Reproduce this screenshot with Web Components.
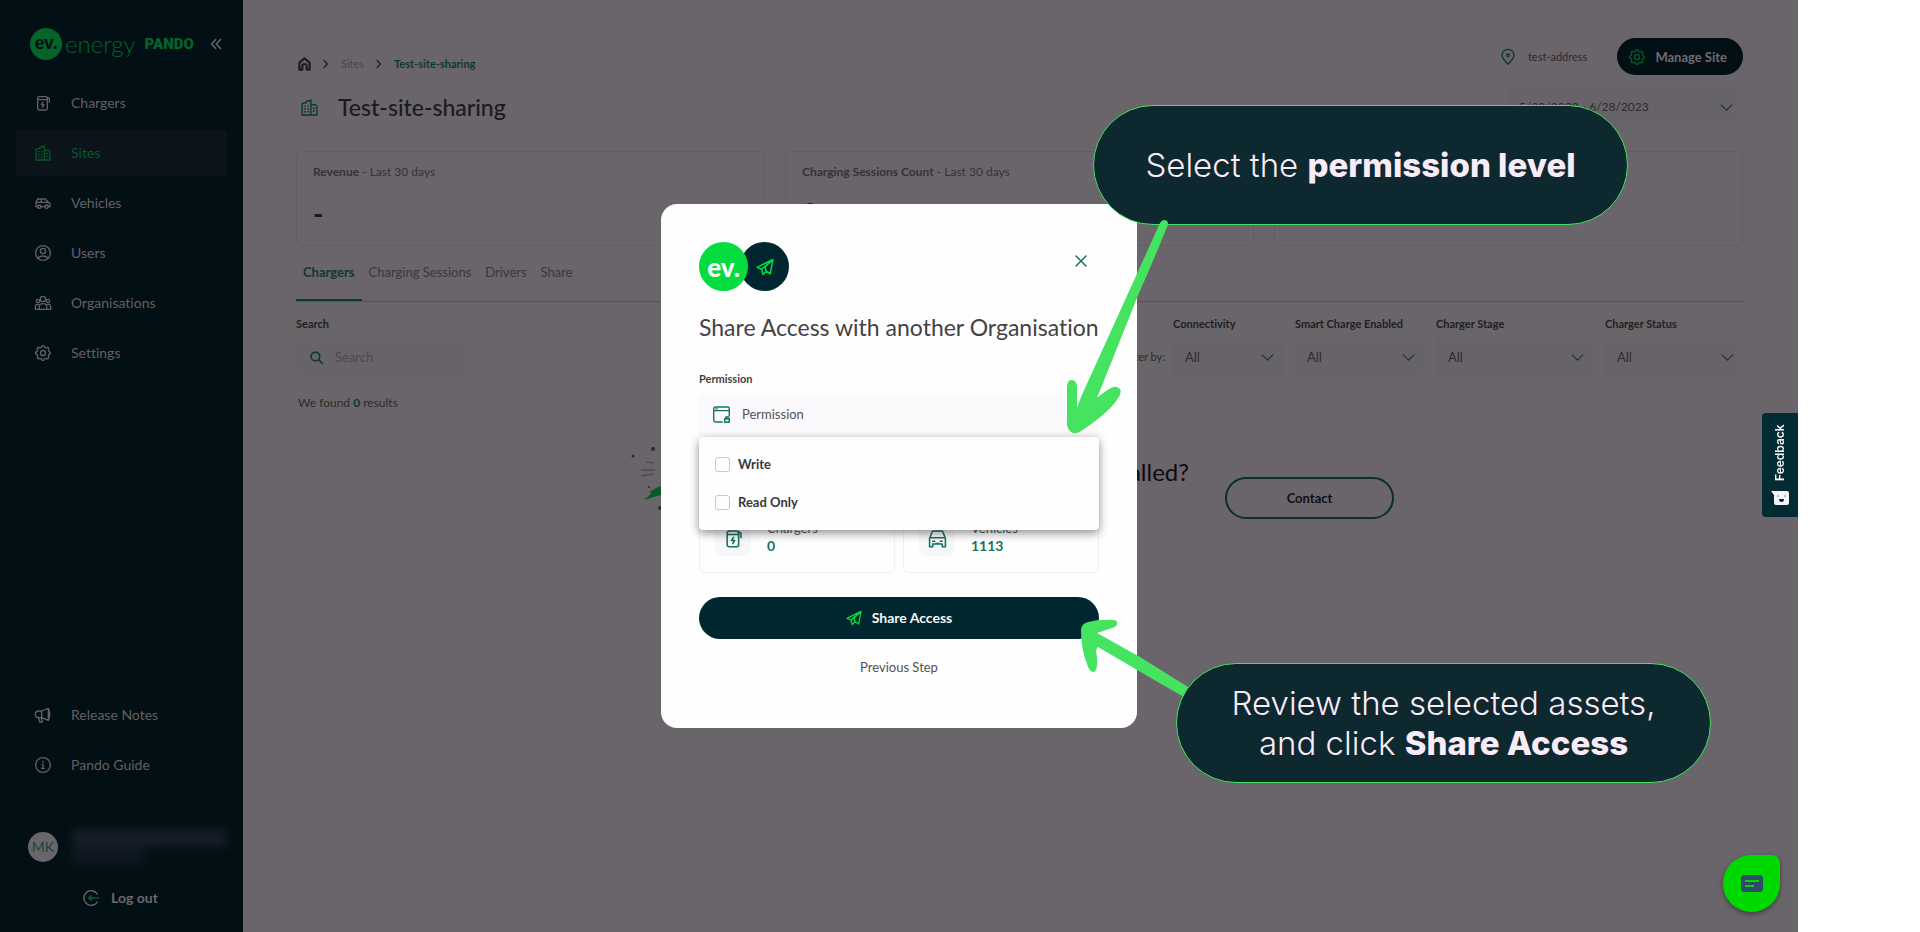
<!DOCTYPE html>
<html lang="en">
<head>
<meta charset="utf-8">
<title>Test-site-sharing | Pando</title>
<style>
  html, body { margin: 0; background: #fff; }
  body { font-family: Lato, "Noto Sans", sans-serif; font-size: 14px; line-height: 20px; font-variant-ligatures: none; }
</style>
</head>
<body>
<pando-app></pando-app>

<script>
/* ── icons, 24 unit grid ────────────────────────────────────────────────── */

const icons = {
  charger: '<path d="M4 5.5A3 3 0 0 1 7 2.500h8.500a3 3 0 0 1 3 3V20a2.500 2.500 0 0 1-2.500 2.500H6.500A2.500 2.500 0 0 1 4 20zM4 7h14.500M18.500 3.500l3 2v5.500M12 10.500l-2.500 4h4l-2.500 4"/>',
  site: '<path d="M1.500 6.500 7.500 5V3.500L14 1.500v21H1.500zM14 8h6.500l2 2v12.500H14M5 10h1M9.500 10h1M5 14h1M9.500 14h1M5 18h1M9.500 18h1M17.500 13h1.500M17.500 17h1.500"/>',
  van: '<path d="M4 17.500H1.500V11L4 6h11.500l4.500 5 2.500 1.500v5H20M9 17.500h6M1.500 11H20M9.500 6v5"/><circle cx="6.500" cy="17.500" r="2.500"/><circle cx="17.500" cy="17.500" r="2.500"/>',
  user: '<circle cx="12" cy="12" r="11"/><circle cx="12" cy="9" r="4"/><path d="M4.500 19.500c4-4 11-4 15 0"/>',
  group: '<circle cx="12" cy="6" r="4"/><circle cx="4.500" cy="9" r="2.500"/><circle cx="19.500" cy="9" r="2.500"/><path d="M6.500 21.500v-4c0-6 11-6 11 0v4zM6.500 21.500H.5v-4c0-3 2.500-4 5-3.500M17.500 21.500h6v-4c0-3-2.500-4-5-3.500"/>',
  gear: '<path d="M9.500 3.500 11 1h2l1.500 2.500q1 .2 2 .8L19.200 3.500l1.500 1.500-.8 2.700q.6 1 .8 2L23 11v2l-2.300 1.500q-.2 1-.8 2l.8 2.700-1.500 1.500-2.700-.8q-1 .6-2 .8L13 23h-2l-1.500-2.300q-1-.2-2-.8l-2.700.8-1.500-1.500.8-2.700q-.6-1-.8-2L1 13v-2l2.300-1.500q.2-1 .8-2L3.300 5l1.500-1.500 2.700.8q1-.6 2-.8z"/><circle cx="12" cy="12" r="3.800"/>',
  horn: '<path d="M10 6H5.500a4.500 4.500 0 0 0 0 10H10l10 4V2zM10 6v10M5.500 16l1.500 6.500h4L9.500 16M20 2q4.500 9 0 18"/>',
  info: '<circle cx="12" cy="12" r="11"/><path d="M12 11v6M10.500 11H12M10 17h4M12 6.500v1.500"/>',
  exit: '<path d="M21.500 6a11 11 0 1 0 0 12"/><path d="M24 12H9M12.500 8.500 8 12l4.500 3.500z" stroke="#04582c" fill="#04582c"/>',
  home: '<path d="M2.500 10 12 1.500l9.500 8.500v12.500H16V16a4 4 0 0 0-8 0v6.500H2.500z"/>',
  right: '<path d="m6 1 10 11L6 23"/>',
  down: '<path d="m2 7 10 10L22 7"/>',
  back: '<path d="M11.500 3 3 12l8.500 9M21 3l-8.500 9 8.500 9"/>',
  close: '<path d="m2 2 20 20M22 2 2 22"/>',
  pin: '<path d="M12 23C7 17 3 14 3 9.500a9 9 0 0 1 18 0C21 14 17 17 12 23z"/><circle cx="12" cy="9.500" r="2"/>',
  search: '<circle cx="10" cy="10" r="8"/><path d="m16 16 7 7"/>',
  plane: '<path d="M1.500 12.500 22.500 2l-3.500 19-5.500-3.500L9.500 22 7.500 15zM7.500 15 22.500 2 12 12l1.500 5.500"/>',
  window: '<path d="M13 22.500H3.500a2.500 2.500 0 0 1-2.500-2.500V4a2.500 2.500 0 0 1 2.500-2.500h17A2.500 2.500 0 0 1 23 4v10M1 6.500h22M4 4h2"/><rect x="16.500" y="18" width="6.500" height="5"/><path d="M18 18v-2.500h3.500V18"/>',
  car: '<path d="M2 22.500V12l3-8q.5-1.500 2-1.500h10q1.500 0 2 1.500l3 8v10.500h-4V19H6v3.500zM3 11h18M6 15.500h2.500M15.500 15.500H18M10 18.500h4"/>'
};

const define = (name, html) => {
  customElements.define(name, class extends HTMLElement {
    connectedCallback() {
      if (this.shadowRoot) return;
      const root = this.attachShadow({ mode: 'open' });
      const attr = (key, fallback = '') => this.getAttribute(key) || fallback;
      root.innerHTML = typeof html === 'function' ? html(attr) : html;
    }
  });
};

define('ui-icon', attr => `
  <style>
    :host { display: inline-flex; flex: none; width: 16px; height: 16px; }
    svg { width: 100%; height: 100%; overflow: visible; }
  </style>
  <svg viewBox="0 0 24 24" fill="none" stroke="currentColor" stroke-width="${attr('weight', '2')}"
    stroke-linejoin="round" stroke-linecap="round" aria-hidden="true">${icons[attr('name')]}</svg>
`);

/* ── sidebar ────────────────────────────────────────────────────────────── */

define('side-link', attr => `
  <style>
    :host { display: block; }
    a {
      display: flex;
      align-items: center;
      gap: 20px;
      height: 46px;
      padding: 0 19px;
      border-radius: 4px;
      color: #636066;
      text-decoration: none;
    }
    :host([active]) a { background: #0b141a; color: #04582c; }
  </style>
  <a href="#${attr('icon')}"><ui-icon name="${attr('icon')}"></ui-icon><slot></slot></a>
`);

define('side-bar', `
  <style>
    :host {
      display: flex;
      flex-direction: column;
      box-sizing: border-box;
      width: 243px;
      flex: none;
      padding: 24px 16px;
      background: #020f14;
      color: #6a676d;
    }
    .brand { display: flex; align-items: center; height: 40px; padding-left: 14px; color: #04642a; }
    .mark {
      width: 32px;
      height: 32px;
      border-radius: 50%;
      background: #04642a;
      color: #020f14;
      font-size: 18px;
      font-weight: 900;
      line-height: 28px;
      text-align: center;
    }
    .energy { margin-left: 3px; font-size: 24px; font-weight: 300; line-height: 32px; }
    .pando { margin-left: 9px; font: 900 15px/24px Roboto, sans-serif; }
    button { border: 0; padding: 0; background: none; color: inherit; font: inherit; cursor: pointer; }
    .fold { display: flex; margin-left: auto; margin-right: 5px; color: #6a676d; }
    .fold ui-icon { width: 12px; height: 12px; }
    nav { display: flex; flex-direction: column; gap: 4px; }
    .top { margin-top: 16px; }
    .bottom { margin-top: auto; }
    .person { display: flex; align-items: center; gap: 14px; height: 30px; margin: 44px 0 0 12px; }
    .avatar {
      width: 30px;
      height: 30px;
      border-radius: 50%;
      background: #6a656a;
      color: #0d4a3c;
      line-height: 30px;
      text-align: center;
    }
    .redacted { display: flex; flex-direction: column; filter: blur(4px); }
    .redacted i { display: block; height: 18px; width: 154px; background: #161d26; }
    .redacted i + i { width: 72px; background: #0f1820; }
    .logout { display: flex; align-items: center; gap: 12px; height: 20px; margin: 26px 0 0 67px; font-weight: 700; }
  </style>
  <div class="brand">
    <span class="mark">ev.</span><span class="energy">energy</span><span class="pando">PANDO</span>
    <button class="fold" aria-label="Collapse menu"><ui-icon name="back" weight="3"></ui-icon></button>
  </div>
  <nav class="top">
    <side-link icon="charger">Chargers</side-link>
    <side-link icon="site" active>Sites</side-link>
    <side-link icon="van">Vehicles</side-link>
    <side-link icon="user">Users</side-link>
    <side-link icon="group">Organisations</side-link>
    <side-link icon="gear">Settings</side-link>
  </nav>
  <nav class="bottom">
    <side-link icon="horn">Release Notes</side-link>
    <side-link icon="info">Pando Guide</side-link>
  </nav>
  <div class="person">
    <span class="avatar">MK</span>
    <div class="redacted"><i></i><i></i></div>
  </div>
  <button class="logout"><ui-icon name="exit"></ui-icon>Log out</button>
`);

/* ── page parts ─────────────────────────────────────────────────────────── */

define('page-header', `
  <style>
    :host { display: block; }
    .row { display: flex; align-items: center; justify-content: space-between; }
    nav, .tools, .title { display: flex; align-items: center; }
    nav { box-sizing: border-box; font-size: 11px; gap: 11px; height: 37px; padding: 14px 0 0 2px; }
    nav a { color: #48454a; text-decoration: none; }
    nav .home { display: flex; color: #0c0c10; }
    nav .home ui-icon { width: 13px; height: 14px; }
    nav ui-icon { width: 8px; height: 10px; color: #1c1b20; }
    nav .here { color: #0c3a30; font-weight: 700; }
    .tools { font-size: 11px; color: #2c2a2f; }
    .tools > ui-icon { color: #0c3a30; margin-right: 12px; }
    .tools span { margin-right: 30px; }
    .manage {
      display: flex;
      align-items: center;
      gap: 10px;
      height: 37px;
      padding: 0 16px 0 12px;
      border: 0;
      border-radius: 20px;
      background: #020f14;
      color: #6f6b71;
      font: 700 13px/20px Lato, sans-serif;
    }
    .manage ui-icon { color: #04582c; }
    .title { gap: 20px; height: 64px; padding-left: 5px; }
    .title ui-icon { width: 17px; height: 17px; color: #0c3a30; }
    h1 { margin: 0; font-size: 23px; line-height: 32px; font-weight: 500; color: #1b1a1f; }
    .field { position: relative; display: flex; align-items: center; }
    select {
      appearance: none;
      width: 236px;
      height: 38px;
      padding: 0 12px;
      border: 0;
      background: #676368;
      color: #2c2a2f;
      font: 12px/20px Lato, sans-serif;
    }
    .field ui-icon { position: absolute; right: 10px; width: 13px; height: 13px; color: #0c3a30; pointer-events: none; }
  </style>
  <div class="row">
    <nav aria-label="Breadcrumb">
      <a class="home" href="#home" aria-label="Home"><ui-icon name="home" weight="4"></ui-icon></a>
      <ui-icon name="right" weight="4"></ui-icon>
      <a href="#sites">Sites</a>
      <ui-icon name="right" weight="4"></ui-icon>
      <a class="here" href="#site">Test-site-sharing</a>
    </nav>
    <div class="tools">
      <ui-icon name="pin" weight="2"></ui-icon><span>test-address</span>
      <button class="manage"><ui-icon name="gear"></ui-icon>Manage Site</button>
    </div>
  </div>
  <div class="row">
    <div class="title"><ui-icon name="site"></ui-icon><h1>Test-site-sharing</h1></div>
    <div class="field">
      <select aria-label="Date range"><option>5/29/2023 - 6/28/2023</option></select>
      <ui-icon name="down"></ui-icon>
    </div>
  </div>
`);

define('stat-card', `
  <style>
    :host {
      display: block;
      box-sizing: border-box;
      height: 95px;
      padding: 10px 16px;
      border: 1px solid #625e63;
      border-radius: 6px;
      color: #343237;
      font-size: 12px;
    }
    strong { font-size: 28px; line-height: 32px; color: #1b1a1f; display: block; margin-top: 15px; }
  </style>
  <slot></slot>
  <strong><slot name="value"></slot></strong>
`);

define('tab-bar', `
  <style>
    :host { display: flex; border-bottom: 1px solid #565257; height: 55px; font-size: 13px; }
    a { padding: 16px 7px 0; color: #3a383d; text-decoration: none; box-sizing: border-box; height: 55px; }
    a.on { color: #0c3a30; font-weight: 700; border-bottom: 2px solid #0c3a30; }
  </style>
  <a class="on" href="#chargers">Chargers</a>
  <a href="#sessions">Charging Sessions</a>
  <a href="#drivers">Drivers</a>
  <a href="#share">Share</a>
`);

define('filter-select', attr => `
  <style>
    :host { display: block; }
    label { display: block; font-size: 11px; line-height: 16px; font-weight: 700; color: #1f1e22; white-space: nowrap; }
    .field { position: relative; display: flex; align-items: center; margin-top: 6px; }
    select {
      appearance: none;
      width: 100%;
      height: 38px;
      padding: 0 12px;
      border: 0;
      border-radius: 4px;
      background: #676368;
      color: #2c2a2f;
      font: 13px/20px Lato, sans-serif;
    }
    ui-icon { position: absolute; right: 9px; width: 13px; height: 13px; color: #0c3a30; pointer-events: none; }
  </style>
  <label for="pick">${attr('label')}</label>
  <div class="field">
    <select id="pick"><option>All</option></select>
    <ui-icon name="down"></ui-icon>
  </div>
`);

define('filter-row', `
  <style>
    :host { display: flex; justify-content: space-between; align-items: flex-end; }
    .search label { display: block; font-size: 11px; line-height: 16px; font-weight: 700; color: #1f1e22; }
    .field { display: flex; align-items: center; gap: 12px; width: 170px; height: 38px; margin-top: 6px; padding: 0 14px; box-sizing: border-box; background: #676368; border-radius: 4px; }
    .field ui-icon { width: 13px; height: 13px; color: #0c3a30; }
    input { min-width: 0; width: 100%; border: 0; padding: 0; background: none; font: 13px/20px Lato, sans-serif; }
    input::placeholder { color: #4c494e; opacity: 1; }
    .filters { display: flex; align-items: flex-end; gap: 12px; }
    .by { font-size: 11px; line-height: 38px; color: #2c2a2f; margin-right: -4px; }
  </style>
  <div class="search">
    <label for="search">Search</label>
    <div class="field"><ui-icon name="search" weight="3"></ui-icon><input id="search" type="text" placeholder="Search"></div>
  </div>
  <div class="filters">
    <span class="by">Filter by:</span>
    <filter-select label="Connectivity" style="width:110px"></filter-select>
    <filter-select label="Smart Charge Enabled" style="width:129px"></filter-select>
    <filter-select label="Charger Stage" style="width:157px"></filter-select>
    <filter-select label="Charger Status" style="width:138px"></filter-select>
  </div>
`);

define('empty-state', `
  <style>
    :host { display: flex; justify-content: center; align-items: flex-start; padding-right: 14px; color: #0c0c10; }
    svg { width: 150px; height: 130px; flex: none; }
    h2 { width: 408px; margin: 19px 36px 0 0; font-size: 24px; line-height: 32px; font-weight: 400; text-align: right; }
    button {
      width: 169px;
      height: 42px;
      margin-top: 40px;
      border: 2px solid #0b2f2a;
      border-radius: 21px;
      background: none;
      color: #101014;
      font: 700 13px/20px Lato, sans-serif;
    }
  </style>
  <svg viewBox="0 0 150 130" aria-hidden="true">
    <g stroke="#3b4550" fill="none"><path d="M15 25l8 1M10 33h14M10 39l13-2"/></g>
    <g fill="#2b2a30"><circle cx="2" cy="19" r="1.500"/><circle cx="22" cy="12" r="2"/><circle cx="18" cy="50" r="1"/><circle cx="29" cy="71" r="2"/></g>
    <path d="M13 63l8-7-3-1 9-5 12-3-8 7 5 2z" fill="#065c28"/>
  </svg>
  <h2>Want a charger installed?</h2>
  <button>Contact</button>
`);

/* ── share dialog ───────────────────────────────────────────────────────── */

define('asset-card', attr => `
  <style>
    :host { display: flex; gap: 16px; flex: 1; box-sizing: border-box; height: 70px; padding: 16px 15px; border: 1px solid #f1eff2; border-radius: 6px; }
    .box { display: grid; place-items: center; width: 36px; height: 36px; border-radius: 8px; background: #f5f7f8; color: #17735f; }
    .box ui-icon { width: 19px; height: 19px; }
    dl, dd { margin: 0; }
    dl { font-size: 13px; line-height: 17px; }
    dt { color: #5a575c; }
    dd { color: #17735f; font-size: 14px; font-weight: 700; }
  </style>
  <span class="box"><ui-icon name="${attr('icon')}"></ui-icon></span>
  <dl><dt>${attr('name')}</dt><dd>${attr('count')}</dd></dl>
`);

define('share-dialog', `
  <style>
    :host {
      position: relative;
      display: block;
      box-sizing: border-box;
      width: 476px;
      padding: 38px 38px 51px;
      border-radius: 16px;
      background: #fefefe;
      color: #454147;
    }
    header { display: flex; justify-content: space-between; align-items: flex-start; }
    .marks { display: flex; }
    .marks span { display: grid; place-items: center; width: 49px; height: 49px; border-radius: 50%; }
    .ev { z-index: 1; background: #04dc3f; color: #fff; font-size: 26px; font-weight: 900; line-height: 24px; }
    .send { margin-left: -8px; background: #002730; color: #04dc3f; }
    .send ui-icon { width: 18px; height: 18px; }
    .close { display: flex; margin: 13px 12px 0 0; padding: 0; border: 0; background: none; color: #17735f; }
    .close ui-icon { width: 12px; height: 12px; }
    h2 { margin: 20px 0 28px; font-size: 23px; line-height: 32px; font-weight: 400; white-space: nowrap; }
    .label { display: block; font-size: 11px; line-height: 16px; font-weight: 700; }
    .picker { position: relative; margin-top: 8px; }
    .picker button {
      display: flex;
      align-items: center;
      gap: 12px;
      width: 100%;
      height: 42px;
      padding: 0 14px 4px;
      border: 0;
      border-radius: 4px;
      background: #fbf9fc;
      color: #545156;
      font: 13px/20px Lato, sans-serif;
    }
    .picker button ui-icon { color: #17735f; width: 17px; height: 17px; }
    .menu {
      position: absolute;
      top: 42px;
      left: 0;
      right: 0;
      display: flex;
      flex-direction: column;
      gap: 18px;
      padding: 17px 16px 18px;
      border-radius: 4px;
      background: #fefefe;
      box-shadow: 0 3px 10px rgba(0, 0, 0, .45);
    }
    .menu label { display: flex; align-items: center; gap: 8px; color: #3a373c; font-size: 13px; font-weight: 700; }
    .menu input { appearance: none; width: 15px; height: 15px; margin: 0; border: 1px solid #cac6cc; border-radius: 3px; }
    .assets { display: flex; gap: 8px; margin: 66px 0 24px; }
    .share {
      display: flex;
      align-items: center;
      justify-content: center;
      gap: 10px;
      width: 100%;
      height: 42px;
      border: 0;
      border-radius: 21px;
      background: #002730;
      color: #f8f5f9;
      font: 700 14px/20px Lato, sans-serif;
    }
    .share ui-icon { color: #04dc3f; }
    .prev { display: block; margin: 18px auto 0; border: 0; padding: 0; background: none; color: #545156; font: 13px/20px Lato, sans-serif; }
  </style>
  <header>
    <div class="marks"><span class="ev">ev.</span><span class="send"><ui-icon name="plane"></ui-icon></span></div>
    <button class="close" aria-label="Close"><ui-icon name="close" weight="3"></ui-icon></button>
  </header>
  <h2>Share Access with another Organisation</h2>
  <label class="label" for="permission">Permission</label>
  <div class="picker">
    <button id="permission" aria-expanded="true"><ui-icon name="window"></ui-icon>Permission</button>
    <div class="menu">
      <label><input type="checkbox">Write</label>
      <label><input type="checkbox">Read Only</label>
    </div>
  </div>
  <div class="assets">
    <asset-card icon="charger" name="Chargers" count="0"></asset-card>
    <asset-card icon="car" name="Vehicles" count="1113"></asset-card>
  </div>
  <button class="share"><ui-icon name="plane"></ui-icon>Share Access</button>
  <button class="prev">Previous Step</button>
  <slot></slot>
`);

/* ── annotations, placed from the dialog's corner ───────────────────────── */

define('call-out', `
  <style>
    :host {
      position: absolute;
      display: grid;
      place-items: center;
      box-sizing: border-box;
      width: 535px;
      height: 120px;
      border: 1px solid #45e35f;
      border-radius: 60px;
      background: #0e2830;
      color: #f9ebf8;
      font: 300 33px/40px Inter, "Noto Sans", sans-serif;
      text-align: center;
      white-space: nowrap;
    }
    ::slotted(b) { font-weight: 800; }
  </style>
  <div><slot></slot></div>
`);

define('guide-arrows', `
  <style>
    :host { position: absolute; left: 0; top: 0; width: 600px; height: 524px; pointer-events: none; }
    svg { overflow: visible; }
  </style>
  <svg width="600" height="524" viewBox="661 204 600 524" fill="#45e35f" aria-hidden="true">
    <path d="M1160 223q3-5 7-2 2 2 0 6-12 30-28 66l-42 105q8-7 14-10 5-3 9 1 2 4-2 9-8 14-37 33-6 4-10 1-5-4-4-12l0-34q1-7 5-6 4 0 5 6l0 22q5-14 9-22z"/>
    <path d="M1081 630q0-6 7-8 11-3 25-2 5 0 4 4 0 3-8 5l-12 4 43 24 48 30-4 10-28-16-58-34q-3 2-1 10 1 15-4 15-4-1-6-8-6-15-6-34z"/>
  </svg>
`);

/* ── floating widgets ───────────────────────────────────────────────────── */

define('feedback-tab', `
  <style>
    :host { position: absolute; right: 0; top: 413px; display: flex; }
    button {
      display: flex;
      align-items: center;
      gap: 10px;
      box-sizing: border-box;
      width: 36px;
      height: 104px;
      padding: 12px 10px;
      border: 0;
      border-radius: 0 4px 4px 0;
      background: #022b33;
      color: #f8f5f9;
      font: 600 12px/16px Inter, sans-serif;
      writing-mode: vertical-rl;
      transform: rotate(180deg);
    }
    svg { transform: rotate(180deg); flex: none; }
  </style>
  <button>
    <svg width="18" height="14" viewBox="0 0 18 14"><path d="M0 0h16q2 0 2 2v10q0 2-2 2H5q-2 0-2-2V4z" fill="#f8f5f9"/><path d="M6 5h2M13 5h2" stroke="#7d858c"/><path d="M8 8h5q0 3-2.500 3T8 8z" fill="#022b33"/></svg>
    Feedback
  </button>
`);

define('chat-bubble', `
  <style>
    :host { position: absolute; right: 18px; bottom: 20px; display: flex; }
    button {
      display: grid;
      place-items: center;
      width: 57px;
      height: 57px;
      padding: 0;
      border: 0;
      border-radius: 50% 8px 50% 50%;
      background: #00d900;
      box-shadow: 0 2px 5px rgba(0, 0, 0, .4);
    }
    svg { display: block; }
  </style>
  <button aria-label="Open chat">
    <svg width="22" height="17" viewBox="0 0 22 17"><rect width="22" height="17" rx="4" fill="#2f4b66"/><path d="M4 6h14M4 11h9" stroke="#00d900" stroke-width="2"/></svg>
  </button>
`);

/* ── app shell ──────────────────────────────────────────────────────────── */

define('pando-app', `
  <style>
    :host { display: block; padding-right: 122px; }
    .stage { position: relative; display: flex; min-height: 100vh; background: #69656a; }
    main { flex: 1; min-width: 0; padding: 38px 55px 40px 53px; }
    .stats { display: grid; grid-template-columns: repeat(3, 1fr); gap: 20px; margin-top: 12px; }
    filter-row { margin-top: 14px; }
    .found { margin: 17px 0 0 2px; color: #2c2a2f; font-size: 12px; }
    .found b { color: #0c3a30; }
    empty-state { margin-top: 24px; }
    .overlay { position: absolute; inset: 0; display: grid; place-items: center; }
  </style>
  <div class="stage">
    <side-bar></side-bar>
    <main>
      <page-header></page-header>
      <div class="stats">
        <stat-card><b>Revenue</b> - Last 30 days<span slot="value">-</span></stat-card>
        <stat-card><b>Charging Sessions Count</b> - Last 30 days<span slot="value">0</span></stat-card>
        <stat-card></stat-card>
      </div>
      <tab-bar></tab-bar>
      <filter-row></filter-row>
      <p class="found">We found <b>0</b> results</p>
      <empty-state></empty-state>
    </main>
    <div class="overlay">
      <share-dialog>
        <call-out style="left:432px; top:-99px">Select the <b>permission level</b></call-out>
        <guide-arrows></guide-arrows>
        <call-out style="left:515px; top:459px">Review the selected assets,<br>and click <b>Share Access</b></call-out>
      </share-dialog>
    </div>
    <feedback-tab></feedback-tab>
    <chat-bubble></chat-bubble>
  </div>
`);
</script>
</body>
</html>
